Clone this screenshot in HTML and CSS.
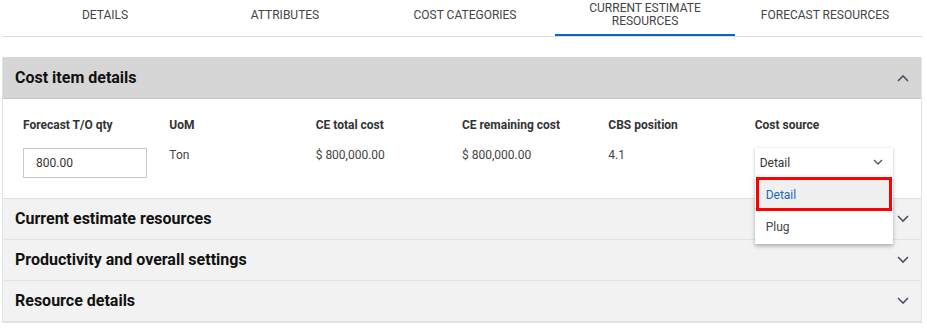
FILE: index.html
```html
<!DOCTYPE html>
<html lang="en">
  <head>
    <meta charset="UTF-8" />
    <meta name="viewport" content="width=device-width, initial-scale=1.0" />
    <title>Cost item</title>
    <link rel="stylesheet" href="styles.css">
  </head>
  <body>
    <div class="page">
      <div class="tabs">
        <div class="tab">DETAILS</div>
        <div class="tab">ATTRIBUTES</div>
        <div class="tab">COST CATEGORIES</div>
        <div class="tab active">CURRENT ESTIMATE<br>RESOURCES</div>
        <div class="tab">FORECAST RESOURCES</div>
      </div>

      <div class="panel">
        <div class="section open">
          <div class="section-head">
            <span class="section-title">Cost item details</span>
            <svg class="chevron" width="12" height="8" viewBox="0 0 12 8"><path d="M1 7 L6 2 L11 7" fill="none" stroke="#4a5563" stroke-width="1.6"/></svg>
          </div>
          <div class="section-body">
            <div class="field">
              <div class="label">Forecast T/O qty</div>
              <input type="text" class="qty" value="800.00" />
            </div>
            <div class="field">
              <div class="label">UoM</div>
              <div class="value">Ton</div>
            </div>
            <div class="field">
              <div class="label">CE total cost</div>
              <div class="value">$ 800,000.00</div>
            </div>
            <div class="field">
              <div class="label">CE remaining cost</div>
              <div class="value">$ 800,000.00</div>
            </div>
            <div class="field">
              <div class="label">CBS position</div>
              <div class="value">4.1</div>
            </div>
            <div class="field">
              <div class="label">Cost source</div>
              <div class="select">
                <div class="select-box">
                  <span>Detail</span>
                  <svg width="10" height="6" viewBox="0 0 10 6"><path d="M1 1 L5 5 L9 1" fill="none" stroke="#4a5563" stroke-width="1.3"/></svg>
                </div>
                <div class="options">
                  <div class="option selected">Detail</div>
                  <div class="option">Plug</div>
                </div>
              </div>
            </div>
          </div>
        </div>

        <div class="section">
          <div class="section-head">
            <span class="section-title">Current estimate resources</span>
            <svg class="chevron" width="12" height="8" viewBox="0 0 12 8"><path d="M1 1 L6 6 L11 1" fill="none" stroke="#4a5563" stroke-width="1.6"/></svg>
          </div>
        </div>
        <div class="section">
          <div class="section-head">
            <span class="section-title">Productivity and overall settings</span>
            <svg class="chevron" width="12" height="8" viewBox="0 0 12 8"><path d="M1 1 L6 6 L11 1" fill="none" stroke="#4a5563" stroke-width="1.6"/></svg>
          </div>
        </div>
        <div class="section">
          <div class="section-head">
            <span class="section-title">Resource details</span>
            <svg class="chevron" width="12" height="8" viewBox="0 0 12 8"><path d="M1 1 L6 6 L11 1" fill="none" stroke="#4a5563" stroke-width="1.6"/></svg>
          </div>
        </div>
      </div>
    </div>
  </body>
</html>
```

FILE: styles.css
```css
body {
  margin: 0;
  font-family: Roboto, "Liberation Sans", Arial, sans-serif;
  background-color: #fff;
  color: #222;
}
.page {
  margin: 0 5px 0 2px;
}
.tabs {
  display: flex;
  padding-left: 13px;
  border-bottom: 1px solid #dcdcdc;
}
.tab {
  width: 180px;
  height: 30px;
  padding-bottom: 4px;
  border-bottom: 2px solid transparent;
  display: flex;
  align-items: center;
  justify-content: center;
  text-align: center;
  font-size: 12px;
  line-height: 13px;
  color: #444;
}
.tab.active {
  border-bottom-color: #0b66cc;
}
.panel {
  margin-top: 20px;
  border-left: 1px solid #e2e2e2;
  border-right: 1px solid #e2e2e2;
  border-bottom: 2px solid #e2e2e2;
}
.section-head {
  height: 40px;
  display: flex;
  align-items: center;
  justify-content: space-between;
  padding: 0 12px 0 12px;
  background-color: #f2f2f2;
  border-top: 1px solid #e2e2e2;
}
.section.open .section-head {
  height: 41px;
  background-color: #d6d6d6;
  border-top: none;
  border-bottom: 1px solid #c6c6c6;
}
.section-title {
  font-size: 16px;
  font-weight: bold;
  color: #111;
  padding-bottom: 1px;
}
.section-body {
  display: grid;
  grid-template-columns: repeat(6, 1fr);
  padding: 18px 20px 20px 20px;
  background-color: #fff;
}
.label {
  font-size: 12px;
  font-weight: bold;
  color: #333;
  line-height: 16px;
  margin-bottom: 15px;
}
.value {
  font-size: 12px;
  color: #444;
  line-height: 14px;
}
.qty {
  box-sizing: border-box;
  width: 124px;
  height: 30px;
  border: 1px solid #c8c8c8;
  padding: 0 12px;
  font-family: inherit;
  font-size: 12px;
  color: #333;
  background-color: #fff;
}
.select {
  position: relative;
  width: 138px;
}
.select-box {
  box-sizing: border-box;
  height: 28px;
  padding: 0 10px 0 5px;
  display: flex;
  align-items: center;
  justify-content: space-between;
  font-size: 12px;
  color: #333;
  background-color: #fff;
  box-shadow: 0 1px 3px rgba(0, 0, 0, 0.25);
}
.select-box span {
  padding-top: 2px;
}
.options {
  position: absolute;
  top: 28px;
  left: 0;
  right: 0;
  background-color: #fff;
  box-shadow: 0 2px 4px rgba(0, 0, 0, 0.3);
  padding: 1px 0 1px 0;
  z-index: 2;
}
.option {
  box-sizing: border-box;
  height: 32px;
  display: flex;
  align-items: center;
  padding-left: 11px;
  font-size: 12px;
  color: #444;
}
.option.selected {
  height: 34px;
  margin: 0 1px;
  padding-left: 7px;
  padding-top: 1px;
  border: 3px solid #f00;
  background-color: #f0f0f0;
  color: #1668c8;
}
```
